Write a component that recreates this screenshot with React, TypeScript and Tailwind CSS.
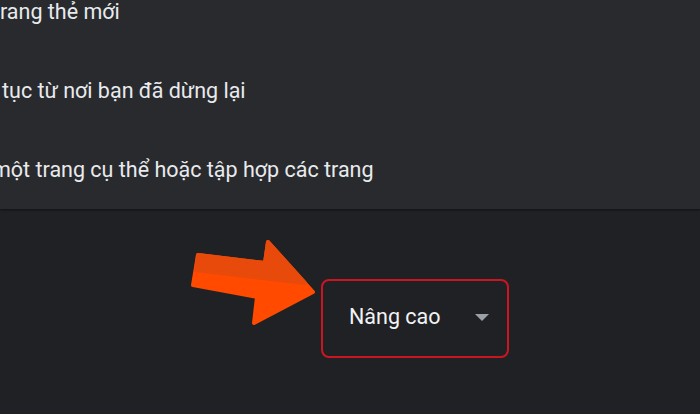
export default function App() {
  return (
    <div className="relative h-[414px] w-[700px] overflow-hidden bg-[#202124] font-['Roboto',sans-serif] text-[#e8eaed]">
      {/* Settings panel */}
      <div className="flex h-[209px] flex-col gap-[55px] overflow-hidden bg-[#292a2d] shadow-[0_1px_2px_rgba(0,0,0,0.5)]">
        <div className="text-[21.5px] leading-[24px]">rang thẻ mới</div>
        <div className="pl-[2px] text-[21.5px] leading-[24px]">tục từ nơi bạn đã dừng lại</div>
        <div className="-ml-[8px] text-[21.5px] leading-[24px]">một trang cụ thể hoặc tập hợp các trang</div>
      </div>

      {/* Advanced button */}
      <div className="ml-[321px] mt-[70px] flex h-[79px] w-[188px] items-center justify-between rounded-[8px] border-2 border-[#cc1520] pl-[26px] pr-[18px] pb-[4px]">
        <span className="text-[21.5px] leading-[24px] text-[#f1f3f4]">Nâng cao</span>
        <svg width="14" height="8" viewBox="0 0 14 8" className="mt-[2px]">
          <path d="M0 0 L14 0 L7 7 Z" fill="#9aa0a6" />
        </svg>
      </div>

      {/* Annotation arrow */}
      <svg className="absolute left-0 top-0" width="700" height="414" viewBox="0 0 700 414">
        <path
          d="M198 255 L265 263 L268 242 L313 292 L254 323 L257 297 L193 285 Z"
          fill="#ff4a00"
          stroke="#ff4a00"
          strokeWidth="4"
          strokeLinejoin="round"
        />
        <path
          d="M198 255 L265 263 L268 242 L305 283 L196 270 Z"
          fill="#e84a0c"
          stroke="#e84a0c"
          strokeWidth="4"
          strokeLinejoin="round"
        />
      </svg>
    </div>
  );
}
